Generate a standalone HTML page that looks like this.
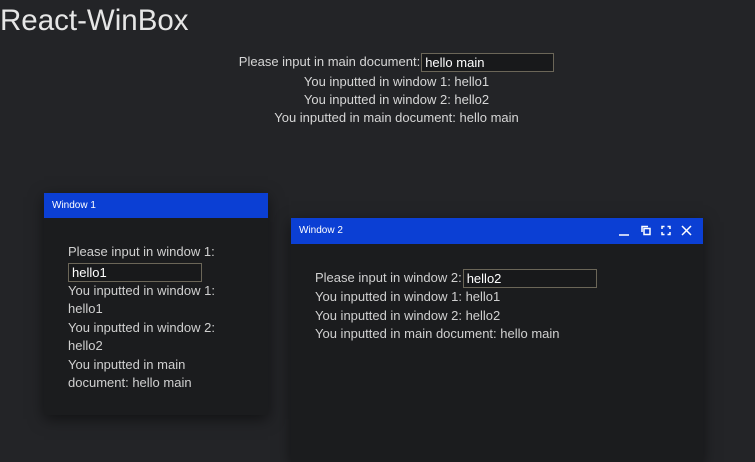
<!DOCTYPE html>
<html><head><style>
html,body{margin:0;padding:0;width:755px;height:462px;overflow:hidden;background:#232427;font-family:"Liberation Sans",sans-serif;color:#d6d6d6;}
.t{position:absolute;left:0;top:4px;font-size:29.5px;color:#e6e6e6;}
.c{position:absolute;left:19px;width:755px;text-align:center;font-size:13px;line-height:19px;}
.inp{display:inline-block;vertical-align:middle;border:1px solid #6b6658;background:#18191b;color:#fff;text-align:left;padding:0 3px;height:19px;line-height:17px;box-sizing:border-box;font-size:13px;}
.win{position:absolute;background:#1b1c1e;box-shadow:0 4px 14px rgba(0,0,0,.5);}
.bar{background:#0b3fd4;color:#fff;font-size:10px;height:25px;line-height:25px;padding-left:8px;position:relative;}
.body{font-size:13px;line-height:18.5px;color:#d0d0d0;}
</style></head><body>
<div class="t">React-WinBox</div>
<div class="c" style="top:52px">Please input in main document:<span class="inp" style="width:133px;margin-left:1px">hello main</span></div>
<div class="c" style="top:72px">You inputted in window 1: hello1</div>
<div class="c" style="top:90px">You inputted in window 2: hello2</div>
<div class="c" style="top:108px">You inputted in main document: hello main</div>

<div class="win" style="left:44px;top:193px;width:224px;height:222px;">
<div class="bar">Window 1</div>
<div class="body" style="padding:25px 0 0 24px;">Please input in window 1:<br><span class="inp" style="width:134px;margin:1px 0 0">hello1</span><br>You inputted in window 1:<br>hello1<br>You inputted in window 2:<br>hello2<br>You inputted in main<br>document: hello main</div>
</div>

<div class="win" style="left:291px;top:218px;width:412px;height:244px;">
<div class="bar" style="height:26px;line-height:26px;">Window 2
<svg style="position:absolute;right:6px;top:6px" width="80" height="14" viewBox="0 0 80 14" fill="none" stroke="#fff" stroke-width="1.5">
<path d="M2 11H12"/>
<rect x="27" y="4.5" width="6" height="6"/><path d="M25 8V2.5H31"/>
<path d="M45 5V2.5H47.5M50.5 2.5H53V5M53 8V10.5H50.5M47.5 10.5H45V8"/>
<path d="M65 2L74 11M74 2L65 11"/>
</svg></div>
<div class="body" style="padding:25px 0 0 24px;">Please input in window 2:<span class="inp" style="width:134px;margin-left:1px">hello2</span><br>You inputted in window 1: hello1<br>You inputted in window 2: hello2<br>You inputted in main document: hello main</div>
</div>
</body></html>
